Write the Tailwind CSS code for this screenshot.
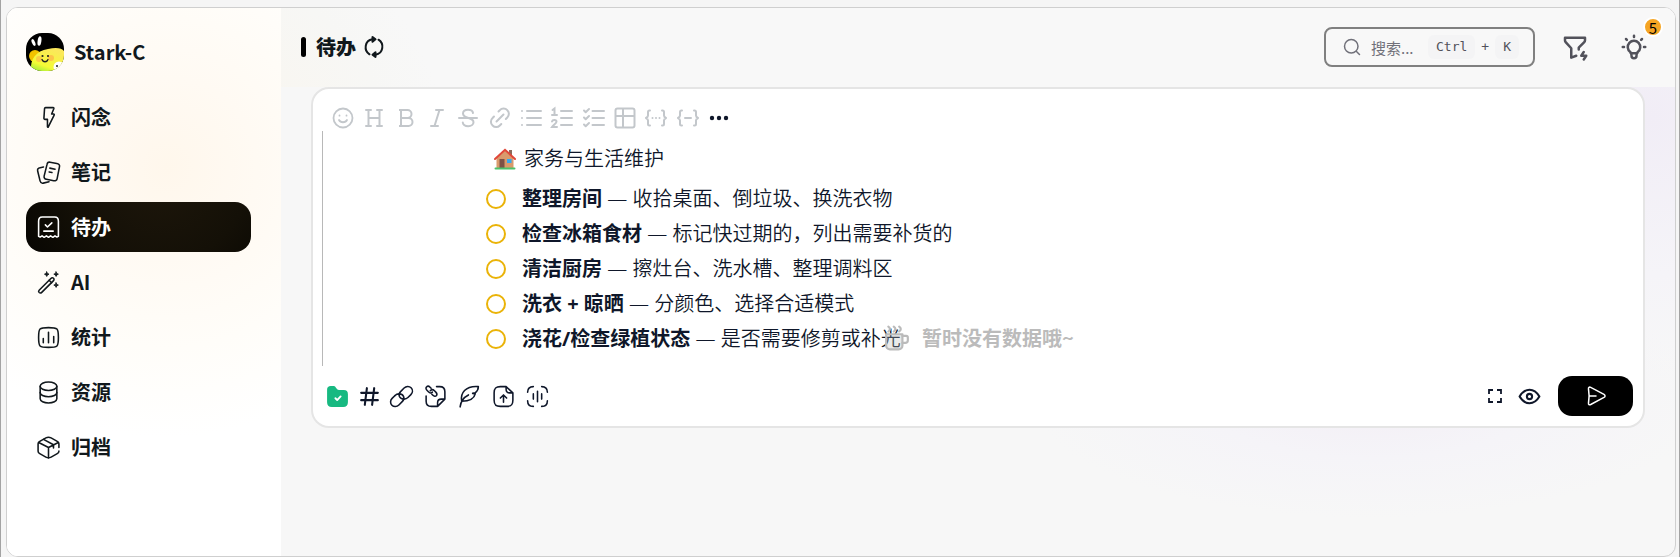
<!DOCTYPE html>
<html lang="zh-CN">
<head>
    <meta charset="UTF-8">
    <meta name="viewport" content="width=device-width, initial-scale=1.0">
    <title>待办</title>
    <script src="https://cdn.jsdelivr.net/npm/@tailwindcss/browser@4"></script>
</head>
<body class="min-h-screen flex bg-[#f5f5f5] border-x border-x-[#a3a3a3] pl-[5px] pr-[3px] pt-[7px] font-['Noto_Sans_CJK_SC',sans-serif] text-xl text-[#11181c]">
    <div class="flex flex-1 min-w-0 overflow-hidden rounded-xl border border-[#cfcfcf] bg-[#f7f7f7]">

        <!-- Sidebar -->
        <aside class="w-[274px] shrink-0 bg-white bg-[radial-gradient(circle_at_160px_160px,#fff7ec_0,#fffaf3_90px,#fffdf9_180px,#ffffff_270px)] pl-[19px] pr-[30px] pt-6">
            <div class="flex items-center gap-2.5 h-10">
                <svg class="size-[38px] rounded-2xl" viewBox="0 0 38 38" aria-hidden="true">
                    <defs>
                        <linearGradient id="face" x1="0" y1="1" x2="0.5" y2="0">
                            <stop offset="0" stop-color="#8ee83c"/>
                            <stop offset="0.35" stop-color="#f4fb36"/>
                            <stop offset="1" stop-color="#fbe85a"/>
                        </linearGradient>
                    </defs>
                    <rect width="38" height="38" fill="#000"/>
                    <ellipse cx="9" cy="23" rx="6" ry="6" fill="#f2c200"/>
                    <path d="M5 38C4 26 10 18 22 16C30 14 36 15 38 18V38Z" fill="url(#face)"/>
                    <ellipse cx="7.500" cy="9.500" rx="1.600" ry="3.600" fill="#fff" transform="rotate(-22 7.500 9.500)"/>
                    <ellipse cx="13.500" cy="8" rx="1.900" ry="4.800" fill="#fff" transform="rotate(8 13.500 8)"/>
                    <circle cx="13" cy="26" r="3" fill="#ffb14a" opacity=".6"/>
                    <circle cx="25" cy="25" r="3" fill="#ffb14a" opacity=".7"/>
                    <circle cx="16.500" cy="23" r="1.100" fill="#222"/>
                    <circle cx="22" cy="23" r="1.100" fill="#222"/>
                    <path d="M16 26.500c1 3 5 3 6 0" fill="none" stroke="#222" stroke-width="1.300" stroke-linecap="round"/>
                    <circle cx="33" cy="34" r="5.500" fill="#fff"/>
                    <circle cx="31" cy="33" r="1" fill="#222"/>
                </svg>
                <span class="font-bold">Stark-C</span>
            </div>

            <nav class="mt-5 flex flex-col gap-[5px] font-bold">
                <a href="#" class="flex items-center gap-2.5 h-[50px] px-2.5 rounded-2xl">
                    <svg class="size-[25px]" viewBox="0 0 24 24" fill="none" stroke="currentColor" stroke-width="1.5" stroke-linejoin="round"><path d="M8.200 3.400C8.300 2.700 8.600 2.500 9.200 2.500H16.400C17.100 2.500 17.300 3 17.100 3.600L15 8.700H16.800C17.600 8.700 17.700 9.400 17.300 10L11.800 21C11.600 21.500 11 21.400 11 20.800V13.800H8.700C8 13.800 7.600 13.400 7.600 12.600Z"/></svg>
                    闪念
                </a>
                <a href="#" class="flex items-center gap-2.5 h-[50px] px-2.5 rounded-2xl">
                    <svg class="size-[25px]" viewBox="0 0 24 24" fill="none" stroke="currentColor" stroke-width="1.5" stroke-linecap="round" stroke-linejoin="round"><path d="M10.600 4.200C10.900 2.500 11.800 1.800 13.500 2.100L20 3.300C21.700 3.600 22.900 4.700 22.600 6.200L20.300 17.800C20 19.400 18.800 20.300 17 19.900L10 18.500C8.400 18.200 7.500 17 7.800 15.500Z"/><path d="M13.300 7.800l5 1M12.600 11.500l2.700.5"/><path d="M7.200 6.700L4 7.400C2 7.800 1.200 8.800 1.600 10.600L3.900 20.100C4.300 21.800 5.300 22.500 6.900 22.200L12.500 20.900"/></svg>
                    笔记
                </a>
                <a href="#" class="flex items-center gap-2.5 h-[50px] px-2.5 rounded-2xl bg-black bg-[radial-gradient(circle_at_134px_-30px,#1e170b_0,#141007_90px,#030201_180px)] text-white">
                    <svg class="size-[25px]" viewBox="0 0 24 24" fill="none" stroke="currentColor" stroke-width="1.5" stroke-linecap="round" stroke-linejoin="round"><path d="M2.500 20.500V6C2.500 3.500 3.500 2 6 2H18C20.500 2 21.500 3.500 21.500 6V20.500L20 21.200L18.200 20L16.200 21.400L14 20L12 21.400L10 20L7.800 21.400L5.800 20L4 21.200Z"/><path d="M9 9.500L11 11.500L15.200 7.500M7.500 15.500H16.500"/></svg>
                    待办
                </a>
                <a href="#" class="flex items-center gap-2.5 h-[50px] px-2.5 rounded-2xl">
                    <svg class="size-[25px]" viewBox="0 0 24 24" fill="none" stroke="currentColor" stroke-width="1.5" stroke-linecap="round" stroke-linejoin="round"><path d="M3.200 19.200L14.300 8.100C15.200 7.200 16.100 7.200 16.800 7.900C17.500 8.600 17.500 9.500 16.600 10.400L5.500 21.500C4.700 22.300 3.700 22.200 3 21.600C2.300 20.900 2.400 20 3.200 19.200Z"/><path d="M12.600 9.900l2.400 2.400"/><path fill="currentColor" d="M10.300 1.800L11 3.300L12.500 4L11 4.700L10.300 6.200L9.600 4.700L8.100 4L9.600 3.300ZM19.300 1.800L20 3.300L21.500 4L20 4.700L19.300 6.200L18.600 4.700L17.100 4L18.600 3.300ZM19.300 12.300L20 13.800L21.500 14.500L20 15.200L19.300 16.700L18.600 15.200L17.100 14.500L18.600 13.800Z" stroke-width=".8"/></svg>
                    AI
                </a>
                <a href="#" class="flex items-center gap-2.5 h-[50px] px-2.5 rounded-2xl">
                    <svg class="size-[25px]" viewBox="0 0 24 24" fill="none" stroke="currentColor" stroke-width="1.500" stroke-linecap="round"><path d="M2.500 12C2.500 7.500 2.500 5.300 3.900 3.900C5.300 2.500 7.500 2.500 12 2.500C16.500 2.500 18.700 2.500 20.100 3.900C21.500 5.300 21.500 7.500 21.500 12C21.500 16.500 21.500 18.700 20.100 20.100C18.700 21.500 16.500 21.500 12 21.500C7.500 21.500 5.300 21.500 3.900 20.100C2.500 18.700 2.500 16.500 2.500 12Z"/><path d="M7 17V13M12 17V7M17 17V11"/></svg>
                    统计
                </a>
                <a href="#" class="flex items-center gap-2.5 h-[50px] px-2.5 rounded-2xl">
                    <svg class="size-[25px]" viewBox="0 0 24 24" fill="none" stroke="currentColor" stroke-width="1.500" stroke-linecap="round"><ellipse cx="12" cy="6" rx="8" ry="4"/><path d="M4 6V18C4 20.200 7.600 22 12 22C16.400 22 20 20.200 20 18V6"/><path d="M4 12C4 14.200 7.600 16 12 16C16.400 16 20 14.200 20 12"/></svg>
                    资源
                </a>
                <a href="#" class="flex items-center gap-2.5 h-[50px] px-2.5 rounded-2xl">
                    <svg class="size-[25px]" viewBox="0 0 24 24" fill="none" stroke="currentColor" stroke-width="1.500" stroke-linecap="round" stroke-linejoin="round"><path d="M22 12V8.500C22 7.200 21.500 6.700 20.400 6.100L14.500 2.800C12.500 1.700 11.500 1.700 9.500 2.800L3.600 6.100C2.500 6.700 2 7.200 2 8.500V15.500C2 16.800 2.500 17.300 3.600 17.900L9.500 21.200C11.500 22.300 12.500 22.300 14.500 21.200L20.400 17.900C21.500 17.300 22 16.800 22 15.500"/><path d="M2.600 7.200L12 12L21.400 7.200M12 12V22M7.200 4.200L16.800 9.300V12.500"/></svg>
                    归档
                </a>
            </nav>
        </aside>

        <!-- Main -->
        <div class="relative flex-1 min-w-0 flex flex-col bg-[radial-gradient(ellipse_340px_120px_at_1090px_390px,#f3eef5_0,#f5f4f8_50%,#f5f4f800_100%),radial-gradient(ellipse_260px_260px_at_1370px_110px,#f1edf6_0,#f5f4f8_60%,#f5f4f800_100%)]">
            <header class="h-[79px] shrink-0 flex items-center bg-[#f8f8f8] bg-[radial-gradient(circle_at_-90px_160px,#faf5ec_0,#f7f7f5_200px,#f8f8f8_260px)] pl-5 pr-[26px] pb-px">
                <span class="w-[5px] h-5 rounded-full bg-black"></span>
                <h1 class="ml-2.5 font-black">待办</h1>
                <button type="button" aria-label="刷新" class="ml-1.5">
                    <svg class="size-6" viewBox="0 0 24 24" fill="none" stroke="currentColor" stroke-width="2" stroke-linecap="round" stroke-linejoin="round"><path d="M7.500 19.300C1.500 15.500 2.500 5.500 10.500 4.300"/><path d="M16.500 4.700C22.500 8.500 21.500 18.500 13.500 19.700"/><path d="M10.500 2L13.500 4.300L10.500 6.800ZM13.500 17.200L10.500 19.700L13.500 22Z" fill="currentColor"/></svg>
                </button>

                <label class="ml-auto flex items-center h-10 w-[211px] rounded-lg border-2 border-[#808080] pl-[17px] pr-3.5 text-[#71717a]">
                    <svg class="size-[18px] shrink-0" viewBox="0 0 24 24" fill="none" stroke="currentColor" stroke-width="2" stroke-linecap="round"><circle cx="11" cy="11" r="9"/><path d="M18 18l4 4"/></svg>
                    <input type="text" aria-label="搜索" placeholder="搜索..." class="ml-2.5 w-[48px] min-w-0 bg-transparent text-[15px] outline-none placeholder:text-[#71717a]">
                    <span class="ml-auto flex items-center gap-1.5 font-['DejaVu_Sans_Mono',monospace] text-[13px] text-[#52525b]">
                        <kbd class="font-[inherit] h-6 px-2 flex items-center rounded-md bg-[#f4f4f5]">Ctrl</kbd>
                        <span>+</span>
                        <kbd class="font-[inherit] h-6 px-2 flex items-center rounded-md bg-[#f4f4f5]">K</kbd>
                    </span>
                </label>
                <button type="button" aria-label="筛选" class="ml-[25px] text-[#52525b]">
                    <svg class="size-[30px]" viewBox="0 0 24 24" fill="none" stroke="currentColor" stroke-width="2" stroke-linecap="round" stroke-linejoin="round"><path d="M13 19l-4 1.500v-7.500l-4.480 -4.928a2 2 0 0 1 -.52 -1.345v-2.227h16v2.172a2 2 0 0 1 -.586 1.414l-4.414 4.414v1.500"/><path d="M19 16l-2 3h4l-2 3"/></svg>
                </button>
                <button type="button" aria-label="提示" class="relative ml-[29px] text-[#52525b]">
                    <svg class="size-[30px]" viewBox="0 0 24 24" fill="none" stroke="currentColor" stroke-width="2" stroke-linecap="round" stroke-linejoin="round"><path d="M3 12h1m8 -9v1m8 8h1m-15.400 -6.400l.7 .7m12.100 -.7l-.7 .7"/><path d="M9 16a5 5 0 1 1 6 0a3.500 3.500 0 0 0 -1 3a2 2 0 0 1 -4 0a3.500 3.500 0 0 0 -1 -3"/><path d="M9.700 17h4.600"/></svg>
                    <span class="absolute -top-[15px] -right-3.5 size-5 flex items-center justify-center rounded-full border-2 border-white bg-[#f5a524] text-[15px] leading-none text-black">5</span>
                </button>
            </header>

            <!-- Editor card -->
            <section class="ml-[30px] mr-[30px] rounded-[18px] border-2 border-[#e5e5e5] bg-white text-[#0f172a]">
                <div class="flex items-center justify-between w-[400px] ml-[18px] pt-4 h-[42px] text-[#c3c7cb]">
                    <button type="button" aria-label="表情"><svg class="size-6" viewBox="0 0 24 24" fill="none" stroke="currentColor" stroke-width="1.800" stroke-linecap="round"><circle cx="12" cy="12" r="9.500"/><path d="M8 14c1.500 3 6.500 3 8 0M8.500 9.500v.2M15.500 9.500v.2"/></svg></button>
                    <button type="button" aria-label="标题"><svg class="size-6" viewBox="0 0 24 24" fill="none" stroke="currentColor" stroke-width="2" stroke-linecap="round"><path d="M6.500 4v16M17.500 4v16M6.500 12h11M4 4h5M4 20h5M15 4h5M15 20h5"/></svg></button>
                    <button type="button" aria-label="粗体"><svg class="size-6" viewBox="0 0 24 24" fill="none" stroke="currentColor" stroke-width="2" stroke-linejoin="round"><path d="M7 4h6.500a4 4 0 0 1 0 8H7zM7 12h7.500a4 4 0 0 1 0 8H7zM5 4h3M5 20h3"/></svg></button>
                    <button type="button" aria-label="斜体"><svg class="size-6" viewBox="0 0 24 24" fill="none" stroke="currentColor" stroke-width="2" stroke-linecap="round"><path d="M11 4h7M6 20h7M14.500 4l-5 16"/></svg></button>
                    <button type="button" aria-label="删除线"><svg class="size-6" viewBox="0 0 24 24" fill="none" stroke="currentColor" stroke-width="2" stroke-linecap="round"><path d="M3 12h18M17 7c-.3-2-2.200-3.200-5-3.200c-3.200 0-5 1.500-5 3.800c0 2.600 2.600 3.600 5.500 4.400c3 .8 5 1.800 5 4.200c0 2.300-2.200 4-5.300 4c-3 0-5-1.300-5.400-3.600"/></svg></button>
                    <button type="button" aria-label="链接"><svg class="size-6" viewBox="0 0 24 24" fill="none" stroke="currentColor" stroke-width="2" stroke-linecap="round"><path d="M8.500 15.500l7-7M10.500 5.500l1.300-1.300a5 5 0 0 1 7.500 0a5 5 0 0 1 0 7.300l-1.500 1.500M6 10.500L4.600 12a5 5 0 0 0 0 7.500a5 5 0 0 0 7.200 0l1.500-1.500"/></svg></button>
                    <button type="button" aria-label="无序列表"><svg class="size-6" viewBox="0 0 24 24" fill="none" stroke="currentColor" stroke-width="2" stroke-linecap="round"><path d="M8 5H22M8 12H22M8 19H22M3 5v.01M3 12v.01M3 19v.01"/></svg></button>
                    <button type="button" aria-label="有序列表"><svg class="size-6" viewBox="0 0 24 24" fill="none" stroke="currentColor" stroke-width="2" stroke-linecap="round"><path d="M11 5H22M11 12H22M11 19H22M2.500 4L4.500 2.500V9M2 9h5M2 15.500c.5-2 4.500-2 4.500 .3c0 1.700-3 3-4.500 5.200h5"/></svg></button>
                    <button type="button" aria-label="任务列表"><svg class="size-6" viewBox="0 0 24 24" fill="none" stroke="currentColor" stroke-width="2" stroke-linecap="round" stroke-linejoin="round"><path d="M10.500 5H22M10.500 12H22M10.500 19H22M2 4.500l1.700 1.700L7 3M2 11.500l1.700 1.700L7 10M2 18.500l1.700 1.700L7 17"/></svg></button>
                    <button type="button" aria-label="表格"><svg class="size-6" viewBox="0 0 24 24" fill="none" stroke="currentColor" stroke-width="2"><rect x="2.500" y="2.500" width="19" height="19" rx="2"/><path d="M2.500 10h19M10 2.500v19"/></svg></button>
                    <button type="button" aria-label="行内代码"><svg class="size-6" viewBox="0 0 24 24" fill="none" stroke="currentColor" stroke-width="2" stroke-linecap="round" stroke-linejoin="round"><path d="M6 4.500H5.500Q4 4.500 4 6V9.500Q4 11 2 12Q4 13 4 14.500V18Q4 19.500 5.500 19.500H6M18 4.500h.5Q20 4.500 20 6V9.500Q20 11 22 12Q20 13 20 14.500V18Q20 19.500 18.500 19.500H18M8.500 12h.01M12 12h.01M15.500 12h.01"/></svg></button>
                    <button type="button" aria-label="代码块"><svg class="size-6" viewBox="0 0 24 24" fill="none" stroke="currentColor" stroke-width="2" stroke-linecap="round" stroke-linejoin="round"><path d="M6 4.500H5.500Q4 4.500 4 6V9.500Q4 11 2 12Q4 13 4 14.500V18Q4 19.500 5.500 19.500H6M18 4.500h.5Q20 4.500 20 6V9.500Q20 11 22 12Q20 13 20 14.500V18Q20 19.500 18.500 19.500H18M9 12h6"/></svg></button>
                    <button type="button" aria-label="更多" class="text-[#0f172a]"><svg class="size-6" viewBox="0 0 24 24" fill="currentColor"><circle cx="5" cy="12" r="2.200"/><circle cx="12" cy="12" r="2.200"/><circle cx="19" cy="12" r="2.200"/></svg></button>
                </div>

                <div class="ml-[9px] h-[235px] border-l border-[#b8b8b8] pl-[163px] pt-2.5 font-['Open_Sans','Noto_Sans_CJK_SC',sans-serif] font-[350]">
                    <h2 class="flex items-center gap-2 h-[35px] pl-2">
                        <svg class="size-[22px]" viewBox="0 0 22 22" aria-hidden="true">
                            <rect x="15" y="2" width="3" height="6" fill="#8a6a5a"/>
                            <path d="M2.500 9.500L11 2L19.500 9.500V20H2.500Z" fill="#d99a6c"/>
                            <path d="M1 11L11 1.800L21 11" fill="none" stroke="#e0483a" stroke-width="2" stroke-linecap="round"/>
                            <rect x="5.500" y="11" width="5" height="9" fill="#7d5146"/>
                            <rect x="13" y="11" width="4.500" height="4" fill="#35a8f0"/>
                            <rect x="0.500" y="19.500" width="21" height="2" rx="1" fill="#4cc26b"/>
                        </svg>
                        家务与生活维护
                    </h2>
                    <ul class="mt-[5px]">
                        <li class="flex items-center gap-4 h-[35px]">
                            <input type="checkbox" id="task1" class="appearance-none size-5 shrink-0 rounded-full border-2 border-[#eab308]">
                            <label for="task1"><strong class="font-bold">整理房间</strong> — 收拾桌面、倒垃圾、换洗衣物</label>
                        </li>
                        <li class="flex items-center gap-4 h-[35px]">
                            <input type="checkbox" id="task2" class="appearance-none size-5 shrink-0 rounded-full border-2 border-[#eab308]">
                            <label for="task2"><strong class="font-bold">检查冰箱食材</strong> — 标记快过期的，列出需要补货的</label>
                        </li>
                        <li class="flex items-center gap-4 h-[35px]">
                            <input type="checkbox" id="task3" class="appearance-none size-5 shrink-0 rounded-full border-2 border-[#eab308]">
                            <label for="task3"><strong class="font-bold">清洁厨房</strong> — 擦灶台、洗水槽、整理调料区</label>
                        </li>
                        <li class="flex items-center gap-4 h-[35px]">
                            <input type="checkbox" id="task4" class="appearance-none size-5 shrink-0 rounded-full border-2 border-[#eab308]">
                            <label for="task4"><strong class="font-bold">洗衣 + 晾晒</strong> — 分颜色、选择合适模式</label>
                        </li>
                        <li class="flex items-center gap-4 h-[35px]">
                            <input type="checkbox" id="task5" class="appearance-none size-5 shrink-0 rounded-full border-2 border-[#eab308]">
                            <label for="task5"><strong class="font-bold">浇花/检查绿植状态</strong> — 是否需要修剪或补光</label>
                        </li>
                    </ul>
                </div>

                <div class="flex items-center gap-[9px] h-[60px] pl-3 pr-2.5">
                    <button type="button" aria-label="待办类型"><svg class="size-[25px]" viewBox="0 0 24 24"><path d="M2 5.500C2 3.300 3.300 2 5.500 2H7.500C9 2 9.600 2.400 10.500 3.500L11.500 4.800C12 5.500 12.600 5.800 13.500 5.800H18C20.800 5.800 22 7 22 9.800V17.500C22 20.500 20.500 22 17.500 22H6.500C3.500 22 2 20.500 2 17.500Z" fill="#17b981"/><path d="M10 13.700l1.700 1.700 3.300-3.500" fill="none" stroke="#fff" stroke-width="1.800" stroke-linecap="round" stroke-linejoin="round"/></svg></button>
                    <button type="button" aria-label="标签" class="-mx-0.5"><svg class="size-[25px]" viewBox="0 0 24 24" fill="none" stroke="currentColor" stroke-width="2" stroke-linecap="round"><path d="M4 8.500H20M4 15.500H20M9.500 4L7.500 20M16.500 4L14.500 20"/></svg></button>
                    <button type="button" aria-label="引用"><svg class="size-[25px]" viewBox="0 0 24 24" fill="none" stroke="currentColor" stroke-width="1.500" stroke-linecap="round" stroke-linejoin="round"><path d="M9.500 9.500C11.500 9.500 13.300 10.300 14 12C14.600 13.600 14.200 15.400 12.900 16.700L9.500 20.100C7.600 22 4.600 22.200 2.800 20.400C1 18.600 1.100 15.700 3 13.800L5.800 11"/><path d="M14.500 14.500C12.500 14.500 10.700 13.700 10 12C9.400 10.400 9.800 8.600 11.100 7.300L14.500 3.900C16.400 2 19.400 1.800 21.200 3.600C23 5.400 22.900 8.300 21 10.200L18.200 13C17.200 14 16 14.500 14.500 14.500M5.800 11C6.800 10 8 9.500 9.500 9.500"/></svg></button>
                    <button type="button" aria-label="附件"><svg class="size-[25px]" viewBox="0 0 24 24" fill="none" stroke="currentColor" stroke-width="1.500" stroke-linecap="round" stroke-linejoin="round"><path d="M13 2.500H16C19.500 2.500 21 4 21 7.500V14.500L14 21.500H8C4.500 21.500 3 20 3 16.500V11.500M14 21.500V18C14 15.500 15 14.500 17.500 14.500H21"/><path d="M7 6.500C8 5 9.500 5 11 6.500L12.300 7.800C13.700 9.200 13.600 10.500 12.800 11.300C12 12.100 10.700 12 9.500 10.800L8.500 9.800M9 7.800C8 9 6.500 8.800 5.200 7.500L4 6.300C2.600 4.900 2.600 3.500 3.500 2.700C4.300 1.900 5.600 1.900 6.800 3.100L7.800 4.100"/></svg></button>
                    <button type="button" aria-label="AI 写作"><svg class="size-[25px]" viewBox="0 0 24 24" fill="none" stroke="currentColor" stroke-width="1.500" stroke-linecap="round" stroke-linejoin="round"><path d="M3 22C3.500 17 6 13 11 10.500M4.500 16.500C3 9 8 1.500 20.500 2.500C20.500 5 19.500 7 17.500 8.500L15 9L17.500 9.500C16.500 14 12 16.500 4.500 16.500Z"/></svg></button>
                    <button type="button" aria-label="上传文件"><svg class="size-[25px]" viewBox="0 0 24 24" fill="none" stroke="currentColor" stroke-width="1.500" stroke-linecap="round" stroke-linejoin="round"><path d="M14.500 2.500H9C4.500 2.500 3 4 3 8.500V15.500C3 20 4.500 21.500 9 21.500H15C19.500 21.500 21 20 21 15.500V8.500L14.500 2.500V5C14.500 7.500 15.500 8.500 18 8.500H21M12 17.500V11M9 13.500L12 10.500L15 13.500"/></svg></button>
                    <button type="button" aria-label="录音"><svg class="size-[25px]" viewBox="0 0 24 24" fill="none" stroke="currentColor" stroke-width="1.500" stroke-linecap="round"><path d="M2.500 8C2.500 4 4 2.500 8 2.500M16 2.500C20 2.500 21.500 4 21.500 8M21.500 16C21.500 20 20 21.500 16 21.500M8 21.500C4 21.500 2.500 20 2.500 16M12 7V17M8 9.500V14.500M16 9.500V14.500"/></svg></button>

                    <button type="button" aria-label="全屏" class="ml-auto"><svg class="size-5" viewBox="0 0 20 20" fill="none" stroke="currentColor" stroke-width="1.800"><path d="M4 8V4H8M12 4h4V8M16 12v4H12M8 16H4V12"/></svg></button>
                    <button type="button" aria-label="预览" class="mx-[3px]"><svg class="size-[25px]" viewBox="0 0 24 24" fill="none" stroke="currentColor" stroke-width="2"><path d="M2.500 12C5 7.800 8.300 5.500 12 5.500S19 7.800 21.500 12C19 16.200 15.700 18.500 12 18.500S5 16.200 2.500 12Z" stroke-linejoin="round"/><circle cx="12" cy="12" r="2.500"/></svg></button>
                    <button type="button" aria-label="发送" class="ml-1 w-[75px] h-10 flex items-center justify-center rounded-[14px] bg-black text-white"><svg class="size-6" viewBox="0 0 24 24" fill="none" stroke="currentColor" stroke-width="1.500" stroke-linecap="round" stroke-linejoin="round"><path d="M4.500 5C4.200 3.500 5.300 2.700 6.700 3.400L20 10.400C21.400 11.200 21.400 12.600 20 13.400L6.700 20.500C5.300 21.200 4.200 20.500 4.500 19C5.300 14.500 5.300 9.500 4.500 5ZM5 12H12"/></svg></button>
                </div>
            </section>

            <!-- Empty state, floats over the editor -->
            <div class="pointer-events-none absolute inset-x-0 top-[316px] flex items-center justify-center gap-3 pl-0.5 font-bold text-[#bbbbbb]">
                <svg class="size-[26px]" viewBox="0 0 24 24" fill="none" stroke="currentColor" stroke-width="2" stroke-linecap="round" stroke-linejoin="round"><path d="M2 8.500H17V19C17 21 15.500 22.500 13.500 22.500H5.500C3.500 22.500 2 21 2 19Z" fill="currentColor" fill-opacity=".3"/><path d="M17 10H20.500C21.500 10 22 10.500 22 11.500V14C22 15.500 21 16.500 19.500 16.500H17"/><path d="M4 1.500c2 1.500 2 3 0 4.500M9 1.500c2 1.500 2 3 0 4.500M14 1.500c2 1.500 2 3 0 4.500"/></svg>
                <span>暂时没有数据哦~</span>
            </div>
        </div>
    </div>
</body>
</html>
